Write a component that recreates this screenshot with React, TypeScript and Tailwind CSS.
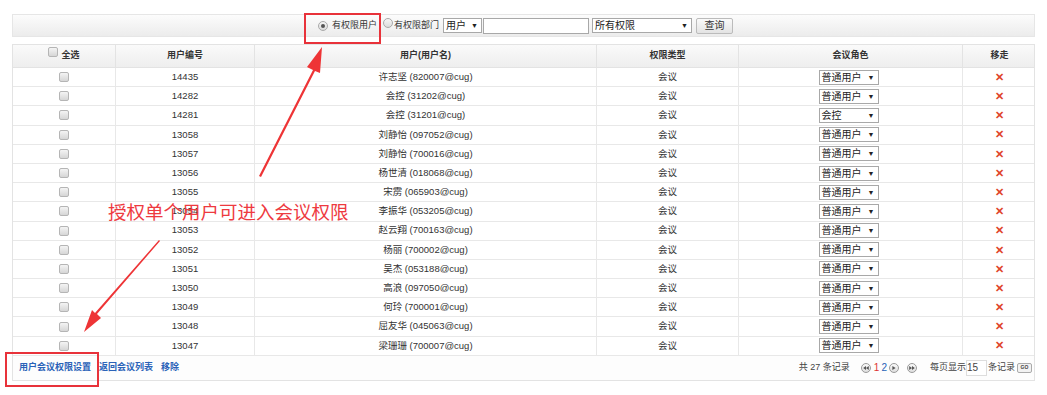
import React from 'react';

type Row = { id: string; name: string; role: string };

const rows: Row[] = [
  { id: '14435', name: '许志坚 (820007@cug)', role: '普通用户' },
  { id: '14282', name: '会控 (31202@cug)', role: '普通用户' },
  { id: '14281', name: '会控 (31201@cug)', role: '会控' },
  { id: '13058', name: '刘静怡 (097052@cug)', role: '普通用户' },
  { id: '13057', name: '刘静怡 (700016@cug)', role: '普通用户' },
  { id: '13056', name: '杨世清 (018068@cug)', role: '普通用户' },
  { id: '13055', name: '宋雳 (065903@cug)', role: '普通用户' },
  { id: '13054', name: '李振华 (053205@cug)', role: '普通用户' },
  { id: '13053', name: '赵云翔 (700163@cug)', role: '普通用户' },
  { id: '13052', name: '杨丽 (700002@cug)', role: '普通用户' },
  { id: '13051', name: '吴杰 (053188@cug)', role: '普通用户' },
  { id: '13050', name: '高浪 (097050@cug)', role: '普通用户' },
  { id: '13049', name: '何玲 (700001@cug)', role: '普通用户' },
  { id: '13048', name: '屈友华 (045063@cug)', role: '普通用户' },
  { id: '13047', name: '梁珊珊 (700007@cug)', role: '普通用户' },
];

const cols = 'grid grid-cols-[103px_139px_342px_142px_224px_73px]';
const font = { fontFamily: '"Liberation Sans", "Noto Sans CJK SC", sans-serif' };

function Check() {
  return <span className="inline-block w-[10px] h-[10px] rounded-[2px] border border-[#b5b5b5] bg-gradient-to-b from-[#f4f4f4] to-[#d6d6d6]" />;
}

function Radio({ on }: { on?: boolean }) {
  return (
    <span className="inline-flex w-[10px] h-[10px] rounded-full border border-[#a9a9a9] bg-gradient-to-b from-[#f6f6f6] to-[#dcdcdc] items-center justify-center">
      {on && <span className="w-[4px] h-[4px] rounded-full bg-[#555]" />}
    </span>
  );
}

function Select({ label, w, size = 'text-[10px]' }: { label: string; w: string; size?: string }) {
  return (
    <span className={`inline-flex items-center justify-between h-[15px] border border-[#a8a8a8] bg-white pl-[2px] pr-[3px] text-[#222] ${size} ${w}`}>
      <span>{label}</span>
      <span className="text-[7px] leading-none">▼</span>
    </span>
  );
}

function PageBtn({ d }: { d: string }) {
  return (
    <span className="inline-flex w-[10px] h-[10px] rounded-full border border-[#9a9a9a] bg-gradient-to-b from-[#fafafa] to-[#dedede] items-center justify-center">
      <svg width="6" height="4" viewBox="0 0 7 5"><path d={d} fill="#555" /></svg>
    </span>
  );
}

export default function App() {
  return (
    <div className="relative w-[1047px] h-[395px] bg-white text-[#333] text-[9.5px] overflow-hidden" style={font}>
      <div className="pt-[14px] pl-[12px]">
        {/* toolbar */}
        <div className="w-[1023px] h-[23px] border border-[#e6e6e6] bg-gradient-to-b from-[#fcfcfc] to-[#ececec] flex items-center pl-[305px] text-[9px]">
          <Radio on />
          <span className="ml-[4px] w-[45px]">有权限用户</span>
          <span className="ml-[6px]"><Radio /></span>
          <span className="ml-[1px] w-[47px]">有权限部门</span>
          <span className="ml-[2px]"><Select label="用户" w="w-[39px]" size="text-[10px]" /></span>
          <span className="ml-[1px] inline-block w-[106px] h-[16px] border border-[#a8a8a8] bg-white" />
          <span className="ml-[3px]"><Select label="所有权限" w="w-[100px]" size="text-[10px]" /></span>
          <span className="ml-[4px] inline-flex items-center justify-center w-[37px] h-[16px] border border-[#bbb] rounded-[2px] bg-gradient-to-b from-[#fafafa] to-[#e3e3e3] text-[10px]">查询</span>
        </div>

        {/* table */}
        <div className="mt-[7px] w-[1023px] border border-[#e3e3e3] border-b-0">
          <div className={`${cols} h-[23px] bg-gradient-to-b from-[#fafafa] to-[#eeeeee] font-bold text-[9px] text-[#333] border-b border-[#e3e3e3]`}>
            <div className="flex items-center justify-center gap-[3px] border-r border-[#e3e3e3]"><span className="-mt-[4px]"><Check /></span>全选</div>
            <div className="flex items-center justify-center border-r border-[#e3e3e3]">用户编号</div>
            <div className="flex items-center justify-center border-r border-[#e3e3e3]">用户(用户名)</div>
            <div className="flex items-center justify-center border-r border-[#e3e3e3]">权限类型</div>
            <div className="flex items-center justify-center border-r border-[#e3e3e3]">会议角色</div>
            <div className="flex items-center justify-center">移走</div>
          </div>
          {rows.map((r) => (
            <div key={r.id} className={`${cols} h-[19.2px] border-b border-[#e8e8e8]`}>
              <div className="flex items-center justify-center border-r border-[#e8e8e8]"><Check /></div>
              <div className="flex items-center justify-center border-r border-[#e8e8e8]">{r.id}</div>
              <div className="flex items-center justify-center border-r border-[#e8e8e8]">{r.name}</div>
              <div className="flex items-center justify-center border-r border-[#e8e8e8]">会议</div>
              <div className="flex items-center justify-center border-r border-[#e8e8e8] pr-[4px]"><Select label={r.role} w="w-[60px]" /></div>
              <div className="flex items-center justify-center text-[#e0452a] font-bold text-[11px]">✕</div>
            </div>
          ))}
          {/* footer */}
          <div className="h-[25px] flex items-center justify-between border-b border-[#e3e3e3] bg-[#fdfdfd] pl-[6px] pr-[2px]">
            <div className="flex gap-[8px] font-bold text-[9px] text-[#2a62b8]">
              <span>用户会议权限设置</span>
              <span>返回会议列表</span>
              <span>移除</span>
            </div>
            <div className="flex items-center text-[9px] text-[#444]">
              <span>共 27 条记录</span>
              <span className="ml-[11px] flex items-center gap-[2px]">
                <PageBtn d="M3.5 0 L0 2.5 L3.5 5 Z M7 0 L3.5 2.5 L7 5 Z" />
                <span className="ml-[1px] text-[#d33] text-[10px]">1</span>
                <span className="text-[#2a62b8] text-[10px]">2</span>
                <PageBtn d="M1.5 0 L5.5 2.5 L1.5 5 Z" />
                <span className="ml-[6px]"><PageBtn d="M0 0 L3.5 2.5 L0 5 Z M3.5 0 L7 2.5 L3.5 5 Z" /></span>
              </span>
              <span className="ml-[13px]">每页显示</span>
              <span className="inline-flex items-center w-[21px] h-[16px] border border-[#ddd] bg-white text-[10px]">15</span>
              <span className="ml-[1px]">条记录</span>
              <span className="ml-[2px] inline-flex items-center justify-center w-[15px] h-[10px] border border-[#aaa] rounded-[2px] bg-[#f2f2f2] text-[5px] font-bold">GO</span>
            </div>
          </div>
        </div>
      </div>

      {/* annotations */}
      <div className="absolute left-[304px] top-[13px] w-[77px] h-[31px] border-2 border-[#e8323a]" />
      <div className="absolute left-[5px] top-[352px] w-[94px] h-[35px] border-2 border-[#e8323a]" />
      <div className="absolute left-[108px] top-[202px] text-[18.5px] text-[#ee3a3f] leading-none" style={{ fontFamily: '"Noto Sans CJK SC", sans-serif' }}>授权单个用户可进入会议权限</div>
      <svg className="absolute left-0 top-0 pointer-events-none" width="1047" height="395">
        <polygon points="259,176 313,70 307,67 322,47 320,73 315,71 261,177" fill="#ee3436" />
        <polygon points="160,241 97,314 101,318 84,332 92,310 95,313 159,240" fill="#ee3436" />
      </svg>
    </div>
  );
}
